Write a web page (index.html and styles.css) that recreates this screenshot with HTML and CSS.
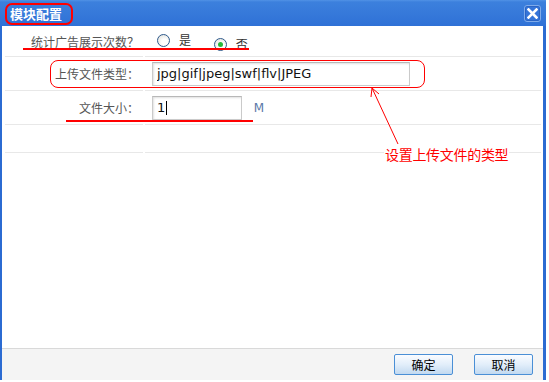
FILE: index.html
```html
<!DOCTYPE html>
<html lang="zh-CN">
<head>
    <meta charset="UTF-8">
    <title>模块配置</title>
    <link rel="stylesheet" href="styles.css">
</head>
<body>
    <div class="dialog">
        <div class="title-bar">
            <span class="title">模块配置</span>
            <span class="close-btn">
                <svg width="11" height="11" viewBox="0 0 11 11">
                    <path d="M1.5 1.5 L9.5 9.5 M9.5 1.5 L1.5 9.5" stroke="#fff" stroke-width="2.6" stroke-linecap="square"/>
                </svg>
            </span>
        </div>

        <div class="dialog-body">
            <table class="form-table">
                <tr class="row-first">
                    <td class="label">统计广告展示次数？</td>
                    <td class="field">
                        <label class="radio"><span class="radio-dot"></span>是</label>
                        <label class="radio"><span class="radio-dot checked"></span>否</label>
                    </td>
                </tr>
                <tr class="row-mid">
                    <td class="label">上传文件类型：</td>
                    <td class="field"><input class="text-input wide" type="text" value="jpg|gif|jpeg|swf|flv|JPEG"></td>
                </tr>
                <tr class="row-mid">
                    <td class="label">文件大小：</td>
                    <td class="field">
                        <span class="input-wrap">
                            <input class="text-input short" type="text" value="1">
                            <span class="caret"></span>
                        </span>
                        <span class="unit">M</span>
                    </td>
                </tr>
                <tr class="row-last">
                    <td class="label"></td>
                    <td class="field"></td>
                </tr>
            </table>
        </div>

        <div class="footer">
            <button class="btn">确定</button>
            <button class="btn">取消</button>
        </div>
    </div>

    <!-- red annotations drawn over the screenshot -->
    <div class="mark mark-title"></div>
    <div class="mark mark-line1"></div>
    <div class="mark mark-box"></div>
    <div class="mark mark-line3"></div>
    <svg class="arrow" width="40" height="64" viewBox="0 0 40 64">
        <path d="M29 58 L3 2" stroke="#f00" stroke-width="1" fill="none"/>
        <path d="M3 2 L2 11 M3 2 L10 8" stroke="#f00" stroke-width="1" fill="none"/>
    </svg>
    <div class="note">设置上传文件的类型</div>
</body>
</html>
```

FILE: styles.css
```css
body {
    margin: 0;
    padding: 0;
    background: #fff;
    font-family: "Noto Sans CJK SC", "DejaVu Sans", sans-serif;
    font-size: 12px;
    position: relative;
    width: 549px;
    height: 382px;
    overflow: hidden;
}

.dialog {
    width: 541px;
    height: 380px;
    border-left: 2px solid #2b6bd2;
    border-right: 3px solid #2b6bd2;
    display: flex;
    flex-direction: column;
    background: #fff;
}

.title-bar {
    height: 26px;
    margin-left: -2px;
    margin-right: -3px;
    background: linear-gradient(#5192e6 0, #3c80dd 2px, #2f71d6 100%);
    display: flex;
    align-items: center;
    justify-content: space-between;
    padding: 0 5px 0 10px;
}

.title {
    color: #fff;
    font-weight: bold;
    font-size: 13px;
}

.close-btn {
    width: 15px;
    height: 15px;
    border: 1px solid #7fabea;
    border-radius: 3px;
    background: #3575d9;
    box-shadow: inset 0 0 0 1px #2a64c4;
    display: flex;
    align-items: center;
    justify-content: center;
    margin-top: 1px;
}

.dialog-body {
    flex: 1;
}

.form-table {
    width: 540px;
    margin-left: 1px;
    border-collapse: separate;
    border-spacing: 2px 0;
    table-layout: fixed;
}

.form-table td {
    border-bottom: 1px solid #e8e8e8;
    padding: 0;
    vertical-align: middle;
}

.form-table td.label {
    width: 134px;
    text-align: right;
    padding-right: 4px;
    color: #555;
}

.form-table td.field {
    padding-left: 7px;
}

.row-first td { height: 30px; }
.row-mid td { height: 33px; }
.row-last td { height: 27px; }

.radio {
    display: inline-flex;
    align-items: center;
    color: #333;
    margin-left: 5px;
    margin-right: 20px;
}

.radio + .radio {
    margin-left: 0;
}

.radio-dot {
    width: 11px;
    height: 11px;
    border: 1px solid #2f5a8c;
    border-radius: 50%;
    background: radial-gradient(circle at 60% 65%, #fff 30%, #dcdcd4 100%);
    margin-right: 9px;
    display: inline-flex;
    align-items: center;
    justify-content: center;
    margin-top: 3px;
}

.radio-dot.checked::after {
    content: "";
    width: 5px;
    height: 5px;
    border-radius: 50%;
    background: #27b83a;
}

.input-wrap {
    position: relative;
    display: inline-block;
    vertical-align: middle;
}

.text-input {
    height: 24px;
    box-sizing: border-box;
    border: 1px solid #cacaca;
    border-top-color: #b8b8b8;
    box-shadow: inset 1px 1px 2px rgba(0, 0, 0, 0.12);
    padding: 0 4px;
    font-family: "DejaVu Sans", sans-serif;
    font-size: 13px;
    color: #111;
    vertical-align: middle;
    outline: none;
}

.text-input.wide { width: 258px; }
.text-input.short { width: 90px; display: block; }

.caret {
    position: absolute;
    left: 14px;
    top: 5px;
    width: 1px;
    height: 14px;
    background: #000;
}

.unit {
    color: #5a78a8;
    margin-left: 9px;
    font-family: "DejaVu Sans", sans-serif;
    vertical-align: middle;
}

.footer {
    height: 31px;
    border-top: 1px solid #d9d9d9;
    background: #f4f4f4;
    display: flex;
    align-items: center;
    justify-content: flex-end;
    gap: 21px;
    padding-right: 10px;
}

.btn {
    width: 59px;
    height: 21px;
    border: 1px solid #4a8fd6;
    border-radius: 2px;
    background: linear-gradient(#fafcff, #e2eefa 50%, #c2d9f0);
    font-family: "Noto Sans CJK SC", sans-serif;
    font-size: 12px;
    color: #000;
    padding: 0;
    line-height: 19px;
}

.mark {
    position: absolute;
    border-color: #f00;
    border-style: solid;
}

.mark-title {
    left: 5px;
    top: 3px;
    width: 64px;
    height: 18px;
    border-width: 2px;
    border-radius: 7px;
}

.mark-line1 {
    left: 23px;
    top: 48px;
    width: 226px;
    height: 0;
    border-width: 1px 0;
}

.mark-box {
    left: 50px;
    top: 60px;
    width: 373px;
    height: 26px;
    border-width: 1px;
    border-radius: 8px;
}

.mark-line3 {
    left: 66px;
    top: 120px;
    width: 187px;
    height: 0;
    border-width: 1px 0;
}

.arrow {
    position: absolute;
    left: 369px;
    top: 86px;
}

.note {
    position: absolute;
    left: 384px;
    top: 144px;
    padding: 0 1px;
    background: #fff;
    color: #f00;
    font-size: 14px;
    line-height: 20px;
    letter-spacing: -0.3px;
}
```
